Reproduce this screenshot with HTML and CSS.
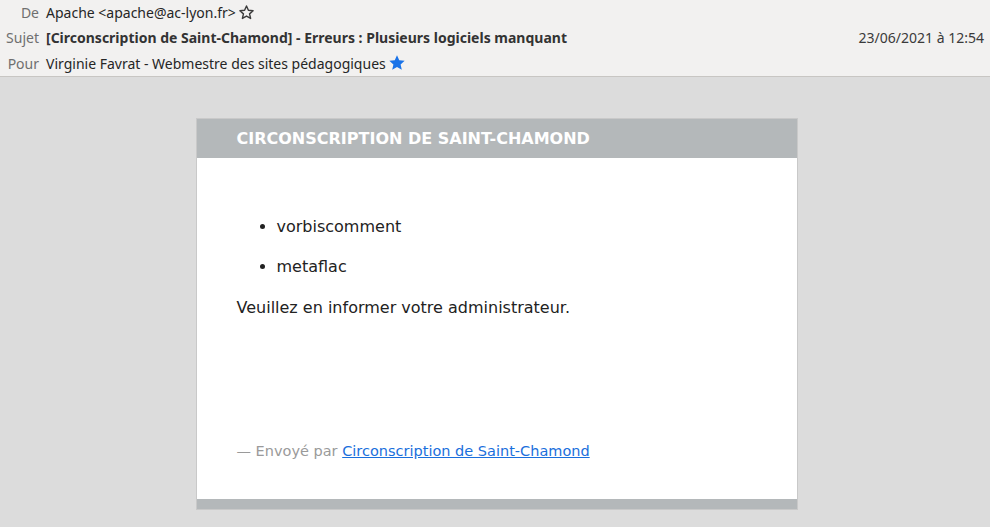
FILE: index.html
```html
<!DOCTYPE html>
<html lang="fr">
<head>
<meta charset="utf-8">
<title>Message</title>
<link rel="stylesheet" href="styles.css">
</head>
<body>
<header class="msg-header">
  <div class="row">
    <span class="label">De</span>
    <span class="value">Apache &lt;apache@ac-lyon.fr&gt;</span>
    <svg class="star" width="17" height="17" viewBox="0 0 24 24"><path d="M12 2.8l2.7 6.1 6.6.6-5 4.4 1.5 6.5L12 17l-5.8 3.4 1.5-6.5-5-4.4 6.6-.6z" fill="none" stroke="#3c3c3c" stroke-width="2" stroke-linejoin="round"/></svg>
  </div>
  <div class="row">
    <span class="label">Sujet</span>
    <span class="value subject">[Circonscription de Saint-Chamond] - Erreurs : Plusieurs logiciels manquant</span>
    <span class="date">23/06/2021 à 12:54</span>
  </div>
  <div class="row">
    <span class="label">Pour</span>
    <span class="value">Virginie Favrat - Webmestre des sites pédagogiques</span>
    <svg class="star" width="18" height="18" viewBox="0 0 24 24"><path d="M12 1.8l3 6.6 7.2.7-5.4 4.8 1.6 7.1L12 17.3l-6.4 3.7 1.6-7.1L1.8 9.1 9 8.4z" fill="#1a73e8"/></svg>
  </div>
</header>
<main class="canvas">
  <div class="card">
    <div class="card-title">CIRCONSCRIPTION DE SAINT-CHAMOND</div>
    <div class="card-body">
      <ul class="list">
        <li>vorbiscomment</li>
        <li>metaflac</li>
      </ul>
      <p class="msg">Veuillez en informer votre administrateur.</p>
      <p class="sig">— Envoyé par <a href="#">Circonscription de Saint-Chamond</a></p>
    </div>
    <div class="card-foot"></div>
  </div>
</main>
</body>
</html>
```
FILE: styles.css
```css
html, body {
  margin: 0;
  padding: 0;
  background: #dcdcdc;
}
body {
  font-family: "Noto Sans", "DejaVu Sans", sans-serif;
}
.msg-header {
  background: #f2f1f0;
  border-bottom: 1px solid #c8c6c3;
  padding: 0 6px 0 0;
  height: 77px;
  box-sizing: border-box;
}
.row {
  display: flex;
  align-items: center;
  height: 26px;
  font-size: 14px;
  color: #262626;
}
.row:first-child { height: 24px; }
.label {
  width: 39px;
  text-align: right;
  color: #6f6f6f;
  margin-right: 7px;
  flex: none;
}
.value { white-space: nowrap; }
.subject { font-weight: bold; color: #333; }
.star { flex: none; margin-left: 2px; }
.date { margin-left: auto; color: #3a3a3a; }
.canvas {
  padding-top: 41px;
  display: flex;
  justify-content: center;
}
.card {
  width: 600px;
  background: #fff;
  border: 1px solid #c9c9c9;
  margin-left: 3px;
}
.card-title {
  background: #b4b8ba;
  color: #fff;
  font-family: "DejaVu Sans", sans-serif;
  font-weight: bold;
  font-size: 16px;
  height: 39px;
  line-height: 39px;
  padding-left: 40px;
}
.card-body {
  padding: 41px 40px 38px;
  font-family: "DejaVu Sans", sans-serif;
  font-size: 16px;
  color: #222;
}
.list {
  margin: 18px 0 0;
  padding-left: 40px;
}
.list li {
  line-height: 20px;
  margin-bottom: 20px;
}
.list li:last-child { margin-bottom: 21px; }
.msg {
  margin: 0;
  line-height: 20px;
}
.sig {
  margin: 123px 0 0;
  font-size: 14.5px;
  color: #9a9a9a;
  line-height: 20px;
}
.sig a { color: #1a6fdc; }
.card-foot {
  height: 10px;
  background: #b4b8ba;
}
```
